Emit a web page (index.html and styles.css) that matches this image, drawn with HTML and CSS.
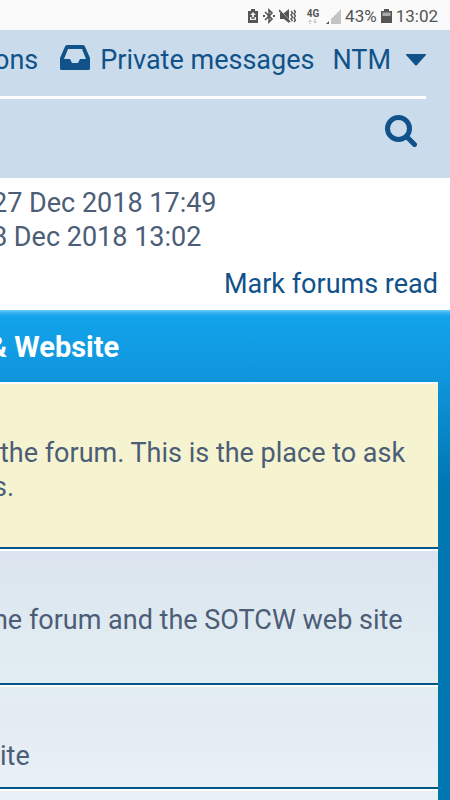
FILE: index.html
```html
<!DOCTYPE html>
<html lang="en">
<head>
<meta charset="UTF-8" />
<meta name="viewport" content="width=device-width, initial-scale=1" />
<title>Forum</title>
<link rel="stylesheet" href="styles.css">
</head>
<body>
  <div class="status-bar">
    <svg class="saver" width="12" height="16" viewBox="0 0 12 16">
      <path d="M4 1h4v2h3v12H1V3h3z" fill="#555"/>
      <path d="M6 4l3 3H7v2h2v3H3V9h2V7H3z" fill="#eee"/>
      <path d="M4 10h4M6 9v2" stroke="#555"/>
    </svg>
    <svg class="bluetooth" width="12" height="16" viewBox="0 0 12 16">
      <path d="M2 4l7 7-3 3V2l3 3-7 7" fill="none" stroke="#555" stroke-width="1.6"/>
      <path d="M0 7h2v2H0zM10 7h2v2h-2z" fill="#555"/>
    </svg>
    <svg class="mute" width="17" height="16" viewBox="0 0 17 16">
      <path d="M1 5h4l5-4v14l-5-4H1z" fill="#555"/>
      <path d="M0 1l12 13" stroke="#fafafa" stroke-width="1"/>
      <path d="M0 2l11 12" stroke="#555" stroke-width="1.6"/>
      <path d="M12 3l1.500 2-1.500 2 1.500 2-1.500 2 1.500 2M15 2l1.500 2L15 6l1.500 2-1.500 2 1.500 2-1.500 2" fill="none" stroke="#555" stroke-width="1.400"/>
    </svg>
    <div class="network">
      <span>4G</span>
      <svg width="10" height="5" viewBox="0 0 10 5">
        <path d="M2 5V1M0.500 2.500L2 1l1.500 1.500M7 0v4M5.500 2.500L7 4l1.500-1.500" fill="none" stroke="#bbb" stroke-width="1"/>
      </svg>
    </div>
    <svg class="signal" width="15" height="15" viewBox="0 0 15 15">
      <path d="M15 0v15H5V10z" fill="#c4c4c4"/>
      <path d="M3 12v3H0z" fill="#555"/>
    </svg>
    <span class="percent">43%</span>
    <svg class="battery" width="11" height="16" viewBox="0 0 11 16">
      <path d="M3 1h5v2h3v12H0V3h3z" fill="#555"/>
      <path d="M1.500 4.500h8V8h-8z" fill="#aaa"/>
    </svg>
    <span>13:02</span>
  </div>

  <header class="navbar">
    <nav class="nav-main">
      <a href="#">ons</a>
      <a href="#" class="messages">
        <svg width="30" height="25" viewBox="0 0 30 25">
          <path fill-rule="evenodd" d="M7 0h16q1.500 0 2 1.500L30 13v10.500q0 1.500-1.500 1.500h-27Q0 25 0 23.500V13L5 1.500Q5.500 0 7 0zM8 4L4 14h6l2 4h6l2-4h6L22 4z"/>
        </svg>
        <span>Private messages</span>
      </a>
      <a href="#" class="user">
        <span>NTM</span>
        <svg width="20" height="12" viewBox="0 0 20 12"><path d="M1 0h18q2 0 .5 1.500L11 11q-1 1-2 0L.5 1.500Q-1 0 1 0z"/></svg>
      </a>
    </nav>
    <div class="nav-search">
      <button type="button" class="search" aria-label="Search">
        <svg width="32" height="32" viewBox="0 0 32 32">
          <circle cx="13.500" cy="13.500" r="11" fill="none" stroke="#105289" stroke-width="5"/>
          <path d="M21.500 21.500l8 8" stroke="#105289" stroke-width="5" stroke-linecap="round"/>
        </svg>
      </button>
    </div>
  </header>

  <main>
    <div class="times">
      <p>27 Dec 2018 17:49</p>
      <p>8 Dec 2018 13:02</p>
    </div>
    <div class="actions"><a href="#">Mark forums read</a></div>

    <section class="forum">
      <h2>&amp; Website</h2>
      <ul class="topics">
        <li class="row unread">
          <p>the forum. This is the place to ask</p>
          <p class="cut">s.</p>
        </li>
        <li class="row about"><p class="cut">he forum and the SOTCW web site</p></li>
        <li class="row site"><p>ite</p></li>
        <li class="row"></li>
      </ul>
    </section>
  </main>
</body>
</html>
```
FILE: styles.css
```css
* {
  box-sizing: border-box;
}
body {
  margin: 0;
  min-height: 100vh;
  display: flex;
  flex-direction: column;
  overflow: hidden;
  background: #fff;
  color: #4c5d77;
  font-family: Roboto, sans-serif;
  font-size: 27px;
  line-height: 34px;
  white-space: nowrap;
}
p, h2, ul {
  margin: 0;
  padding: 0;
}
a {
  color: #105289;
  text-decoration: none;
}

/* Phone status bar */
.status-bar {
  display: flex;
  justify-content: flex-end;
  align-items: center;
  gap: 4px;
  height: 30px;
  padding: 2px 12px 0 0;
  background: #fafafa;
  color: #555;
  font-size: 17px;
  line-height: 24px;
}
.network {
  display: flex;
  flex-direction: column;
  align-items: center;
  width: 14px;
  margin: 0 2px 0 6px;
  font-size: 10px;
  font-weight: 700;
  line-height: 10px;
}

/* Header */
.navbar {
  height: 148px;
  padding-right: 24px;
  background: #cadceb;
  fill: #105289;
}
.nav-main {
  display: flex;
  justify-content: flex-end;
  align-items: center;
  gap: 18px;
  height: 69px;
  padding-bottom: 6px;
  border-bottom: 3px solid #fff;
}
.messages {
  display: flex;
  align-items: center;
  gap: 10px;
  margin-left: 4px;
}
.messages svg {
  margin-bottom: 6px;
}
.user {
  display: flex;
  align-items: center;
  gap: 15px;
}
.nav-search {
  display: flex;
  justify-content: flex-end;
  padding: 16px 9px 0 0;
}
.search {
  display: flex;
  padding: 0;
  border: 0;
  background: none;
}

/* Times and links */
main {
  flex: 1;
  display: flex;
  flex-direction: column;
}
.times {
  margin-left: -8px;
  padding-top: 8px;
}
.actions {
  padding: 13px 12px 9px 0;
  text-align: right;
}

/* Forum list */
.forum {
  flex: 1;
  display: flex;
  flex-direction: column;
  padding-right: 12px;
  background: linear-gradient(#6aceff 0, #35b0f0 3px, #12a3eb 7px, #0f94da 72px, #0076b1 180px, #0076b1);
}
.forum h2 {
  height: 72px;
  margin-left: -12px;
  padding-top: 20px;
  color: #fff;
  font-size: 29px;
  font-weight: 700;
}
.topics {
  flex: 1;
  display: flex;
  flex-direction: column;
  list-style: none;
  background: #e9f0f6;
}
.row {
  padding: 52px 0 43px;
  border-top: 2px solid #fff;
  border-bottom: 2px solid #00588a;
}
.cut {
  margin-left: -7px;
}
.unread {
  background: #f5f3d0;
}
.about {
  padding-bottom: 46px;
  background: linear-gradient(#dce5ef, #e2edf2);
}
.site {
  padding-bottom: 14px;
  background: linear-gradient(#e2edf2, #e5ecf4 50%, #e9f0f6);
}
.row:last-child {
  padding: 0;
  border-bottom: 0;
}
```
